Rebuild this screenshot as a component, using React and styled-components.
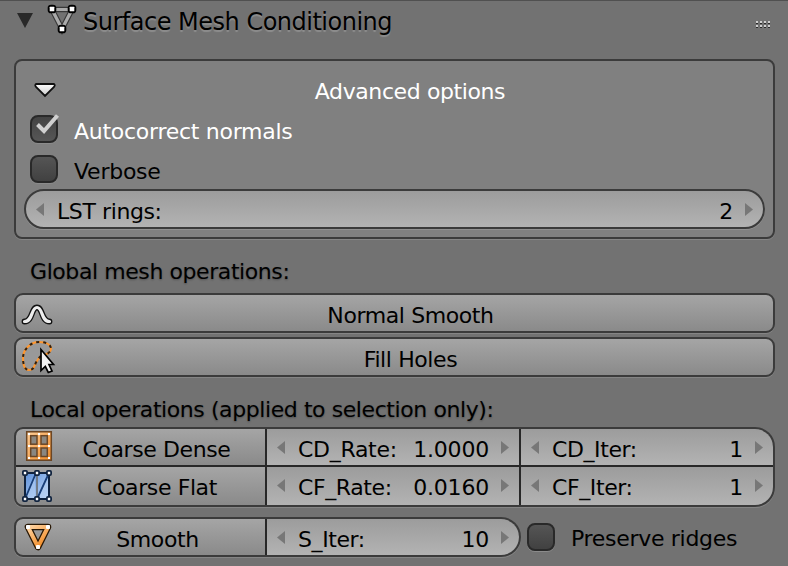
import React from "react";
import styled, { createGlobalStyle, css } from "styled-components";

const Global = createGlobalStyle`
  * { box-sizing: border-box; }
  html, body { margin: 0; padding: 0; background: #727272; overflow: hidden; }
`;

const Panel = styled.main`
  width: 788px;
  height: 566px;
  padding: 0 13px 0 14px;
  border-top: 1px solid #505050;
  background: #727272;
  color: #000;
  font: 22px/38px "DejaVu Sans", sans-serif;
  display: flex;
  flex-direction: column;
`;

const Header = styled.header`
  height: 58px;
  display: flex;
  align-items: flex-start;
`;

const Icon = styled.svg`
  display: block;
  flex: none;
  width: ${(p) => p.$w}px;
  height: ${(p) => p.$h}px;
  margin: ${(p) => p.$margin || 0};
  overflow: visible;
`;

const Text = styled.span`
  display: block;
  height: 36px;
  line-height: ${(p) => p.$line || 41}px;
  white-space: pre;
  letter-spacing: ${(p) => p.$track ?? -0.4}px;
`;

const Title = styled.h1`
  margin: 2px 0 0 6px;
  flex: 1;
  font-size: 24px;
  font-weight: 400;
  line-height: 39px;
  white-space: pre;
  letter-spacing: -0.5px;
  text-shadow: 0 2px 1px rgba(255, 255, 255, 0.2);
`;

const OptionsBox = styled.section`
  height: 180px;
  padding: 10px 8px 8px;
  border: 2px solid #3b3b3b;
  border-radius: 8px;
  background: #808080;
  box-shadow: 0 1px 0 #858585;
`;

const BoxHeading = styled.div`
  height: 40px;
  display: flex;
  padding-left: 10px;
  color: #fff;
`;

const HeadingText = styled(Text)`
  flex: 1;
  text-align: center;
  margin-left: -1px;
`;

const CheckRow = styled.label`
  height: 40px;
  display: flex;
  padding-left: 6px;
  color: ${(p) => p.$color || "#000"};
`;

const CheckBox = styled.span`
  flex: none;
  width: 28px;
  height: 28px;
  margin: ${(p) => p.$top ?? 4}px 16px 0 0;
  border: 2px solid #292929;
  border-radius: 8px;
  background: ${(p) => (p.$checked ? "linear-gradient(#434343, #565656)" : "linear-gradient(#555, #414141)")};
  box-shadow: 0 1px 0 #8b8b8b;
`;

const fieldFill = "linear-gradient(#9c9c9c, #b3b3b3)";
const buttonFill = "linear-gradient(#a5a5a5, #8a8a8a)";

const Field = styled.div`
  display: flex;
  align-items: flex-start;
  height: ${(p) => p.$h || 40}px;
  padding: 0 10px;
  background: ${fieldFill};
  ${(p) => p.$pill && css`
    margin-top: -2px;
    border: 2px solid #3b3b3b;
    border-radius: 20px;
    box-shadow: 0 1px 0 #929292;
  `}
`;

const FieldName = styled(Text)`
  flex: 1;
  margin-left: 13px;
`;

const Label = styled.p`
  margin: ${(p) => p.$margin};
  height: 38px;
  line-height: 39px;
  white-space: pre;
  letter-spacing: -0.42px;
  text-shadow: 0 1px 2px rgba(0, 0, 0, 0.3);
`;

const Button = styled.button`
  display: flex;
  height: ${(p) => p.$h || 40}px;
  width: 100%;
  margin: 0 0 ${(p) => p.$gap || 0}px;
  padding: 0 0 0 ${(p) => (p.$framed ? 5 : 7)}px;
  border: 0;
  background: ${buttonFill};
  color: #000;
  font: inherit;
  ${(p) => p.$framed && css`
    border: 2px solid #3b3b3b;
    border-radius: 9px;
    box-shadow: 0 1px 0 #858585;
  `}
`;

const Caption = styled(Text)`
  flex: 1;
  text-align: center;
  padding-right: ${(p) => p.$right ?? 4}px;
`;

const Grid = styled.div`
  display: grid;
  grid-template-columns: ${(p) => p.$columns};
  grid-template-rows: ${(p) => p.$rows};
  gap: 2px;
  width: ${(p) => p.$w}px;
  height: ${(p) => p.$h}px;
  border: 2px solid #3b3b3b;
  border-radius: ${(p) => p.$radius};
  background: #282828;
  box-shadow: 0 1px 0 #858585;
  overflow: hidden;
`;

const BottomRow = styled.div`
  display: flex;
  margin-top: 10px;
`;

const Arrow = ({ right, margin }) => (
  <Icon $w={8} $h={13} $margin={margin} viewBox="0 0 8 13">
    <path d={right ? "M0 0L8 6.5L0 13Z" : "M8 0L0 6.5L8 13Z"} fill="#777" />
  </Icon>
);

function NumberField({ name, value, nameTrack, pill, h }) {
  return (
    <Field $pill={pill} $h={h}>
      <Arrow margin="12px 0 0" />
      <FieldName $track={nameTrack}>{name}</FieldName>
      <Text $track={-0.2}>{value}</Text>
      <Arrow right margin="12px 0 0 12px" />
    </Field>
  );
}

const MeshIcon = () => (
  <Icon $w={30} $h={30} $margin="3px 0 0 14px" viewBox="0 0 30 30">
    <path d="M5 5.5H25L15 25Z" fill="none" stroke="#383838" strokeWidth="5.5" />
    <path d="M5 5.5H25L15 25Z" fill="none" stroke="#aaa" strokeWidth="3.2" />
    {[[5, 5], [25, 5], [15, 25]].map(([x, y]) => (
      <g key={`${x}-${y}`}>
        <rect x={x - 4.3} y={y - 4.3} width="8.6" height="8.6" rx="3.4" fill="#000" />
        <rect x={x - 2.3} y={y - 2.3} width="4.6" height="4.6" rx=".5" fill="#fff" />
      </g>
    ))}
  </Icon>
);

const Grip = () => (
  <Icon $w={14} $h={7} $margin="20px 5px 0 0" viewBox="0 0 14 7" shapeRendering="crispEdges">
    {[0, 4, 8, 12].map((x) => [0, 4].map((y) => (
      <g key={`${x}-${y}`}>
        <rect x={x} y={y} width="2" height="2" fill="#d0d0d0" />
        <rect x={x} y={y + 2} width="2" height="1" fill="#292929" />
      </g>
    )))}
  </Icon>
);

const CheckMark = () => (
  <Icon $w={24} $h={20} $margin="-3px 0 0 4px" viewBox="0 0 24 20">
    <path d="M1.5 10.5L8 17L21.5 1.5" fill="none" stroke="#d0d0d0" strokeWidth="4" />
  </Icon>
);

const CurveIcon = () => (
  <Icon $w={30} $h={20} $margin="9px 0 0 1px" viewBox="0 0 30 20">
    <path d="M2.5 17.5C11 17.5 9 3.5 15 3.5S19 17.5 27.5 17.5" fill="none" stroke="#111" strokeWidth="5.8" strokeLinecap="round" />
    <path d="M2.5 17.5C11 17.5 9 3.5 15 3.5S19 17.5 27.5 17.5" fill="none" stroke="#eee" strokeWidth="3.2" strokeLinecap="round" />
  </Icon>
);

const lasso = "M19 15C23 14 29 12 29 8C29 3 23 1 17 1C8 1 1 9 1 17C1 24 3 29 7 29C14 29 11 22 19 15Z";

const LassoIcon = () => (
  <Icon $w={32} $h={33} $margin="2px 0 0 1px" viewBox="0 0 32 33">
    <path d={lasso} fill="#999" stroke="#ff962d" strokeWidth="2" />
    <path d={lasso} fill="none" stroke="#30200f" strokeWidth="2" strokeDasharray="3 4" />
    <path d="M19 8.5V29.5L23.3 25.5L26.3 31.5L30 30L27 23.5H31.5Z" fill="#f2f2f2" stroke="#000" strokeWidth="1.7" />
  </Icon>
);

const GridIcon = () => (
  <Icon $w={26} $h={30} $margin="2px 0 0 3px" viewBox="0 0 26 30">
    <defs>
      <linearGradient id="amber" x2="1" y2="1"><stop stopColor="#ffd09b" /><stop offset="1" stopColor="#f08a26" /></linearGradient>
    </defs>
    <path d="M.7.7H25.3V29.3H.7Z" fill="url(#amber)" stroke="#6b4625" strokeWidth="1.5" />
    {[4.7, 15].map((x) => [4.7, 17].map((y) => (
      <rect key={`${x}-${y}`} x={x} y={y} width="6.3" height="8.5" fill="#8a8781" stroke="#6b4625" strokeWidth="1.5" />
    )))}
    {[2, 12, 22].map((x) => [2, 14, 26].map((y) => (
      <rect key={`${x}-${y}`} x={x} y={y} width="2" height="2" fill="#fff" />
    )))}
  </Icon>
);

const FlatIcon = () => (
  <Icon $w={30} $h={32} $margin="3px 1px 0 -1px" viewBox="0 0 30 32">
    <defs>
      <linearGradient id="sky" x2="1" y2="1"><stop stopColor="#5d91dc" /><stop offset="1" stopColor="#c3d9f6" /></linearGradient>
    </defs>
    <path d="M3 3H27V29H3Z" fill="url(#sky)" stroke="#10233f" strokeWidth="2" />
    <path d="M4 27L13 5V28H4ZM17 27L26 6V28H17Z" fill="#b7d0f1" opacity=".55" />
    <path d="M15 3V29" stroke="#727b86" strokeWidth="2" />
    <path d="M3 29L14 3M15 29L27 3" stroke="#193f78" strokeWidth="1.8" />
    {[3, 15, 27].map((x) => [3, 29].map((y) => (
      <rect key={`${x}-${y}`} x={x - 2.1} y={y - 2.1} width="4.2" height="4.2" rx="1" fill="#fff" stroke="#10233f" strokeWidth="1.8" />
    )))}
  </Icon>
);

const TriangleIcon = () => (
  <Icon $w={28} $h={28} $margin="4px 2px 0 1px" viewBox="0 0 28 28">
    <defs>
      <linearGradient id="flame" x2=".7" y2="1"><stop stopColor="#ffd5a4" /><stop offset="1" stopColor="#f28a23" /></linearGradient>
    </defs>
    <path d="M4 4H24L14 24Z" fill="none" stroke="#291805" strokeWidth="6.6" strokeLinejoin="round" />
    <path d="M4 4H24L14 24Z" fill="none" stroke="url(#flame)" strokeWidth="4" strokeLinejoin="round" />
    {[[4, 4], [24, 4], [14, 24]].map(([x, y]) => (
      <rect key={`${x}-${y}`} x={x - 2} y={y - 2} width="4" height="4" rx="1" fill="#fff" />
    ))}
  </Icon>
);

export default function App() {
  return (
    <Panel>
      <Global />
      <Header>
        <Icon $w={16} $h={15} $margin="12px 0 0 3px" viewBox="0 0 16 15">
          <path d="M0 0H16L8 15Z" fill="#292929" />
        </Icon>
        <MeshIcon />
        <Title>Surface Mesh Conditioning</Title>
        <Grip />
      </Header>
      <OptionsBox>
        <BoxHeading>
          <Icon $w={22} $h={14} $margin="12px 0 0" viewBox="0 0 22 14">
            <defs><linearGradient id="pale" x2="0" y2="1"><stop stopColor="#fff" /><stop offset="1" stopColor="#ccc" /></linearGradient></defs>
            <path d="M2 1H20Q21.5 2 20 4L11 13L2 4Q.5 2 2 1Z" fill="url(#pale)" stroke="#111" strokeWidth="1.8" />
          </Icon>
          <HeadingText>Advanced options</HeadingText>
        </BoxHeading>
        <CheckRow $color="#fff">
          <CheckBox $checked><CheckMark /></CheckBox>
          <Text $track={-0.27}>Autocorrect normals</Text>
        </CheckRow>
        <CheckRow>
          <CheckBox />
          <Text $track={-0.25}>Verbose</Text>
        </CheckRow>
        <NumberField name="LST rings:" value="2" pill />
      </OptionsBox>
      <Label $margin="13px 0 3px 16px">Global mesh operations:</Label>
      <Button $framed $gap={4}><CurveIcon /><Caption>Normal Smooth</Caption></Button>
      <Button $framed><LassoIcon /><Caption $right={6}>Fill Holes</Caption></Button>
      <Label $margin="13px 0 -1px 16px">Local operations (applied to selection only):</Label>
      <Grid $w={761} $h={80} $columns="249px 252px 1fr" $rows="36px 38px" $radius="9px 20px 20px 9px">
        <Button $h={36}><GridIcon /><Caption>Coarse Dense</Caption></Button>
        <NumberField h={36} name="CD_Rate:" value="1.0000" nameTrack={-0.3} />
        <NumberField h={36} name="CD_Iter:" value="1" />
        <Button $h={38}><FlatIcon /><Caption>Coarse Flat</Caption></Button>
        <NumberField h={38} name="CF_Rate:" value="0.0160" />
        <NumberField h={38} name="CF_Iter:" value="1" />
      </Grid>
      <BottomRow>
        <Grid $w={507} $h={40} $columns="249px 1fr" $rows="36px" $radius="9px 20px 20px 9px">
          <Button $h={36}><TriangleIcon /><Caption>Smooth</Caption></Button>
          <NumberField h={36} name="S_Iter:" value="10" />
        </Grid>
        <CheckRow>
          <CheckBox $top={6} />
          <Text $line={44} $track={-0.3}>Preserve ridges</Text>
        </CheckRow>
      </BottomRow>
    </Panel>
  );
}
